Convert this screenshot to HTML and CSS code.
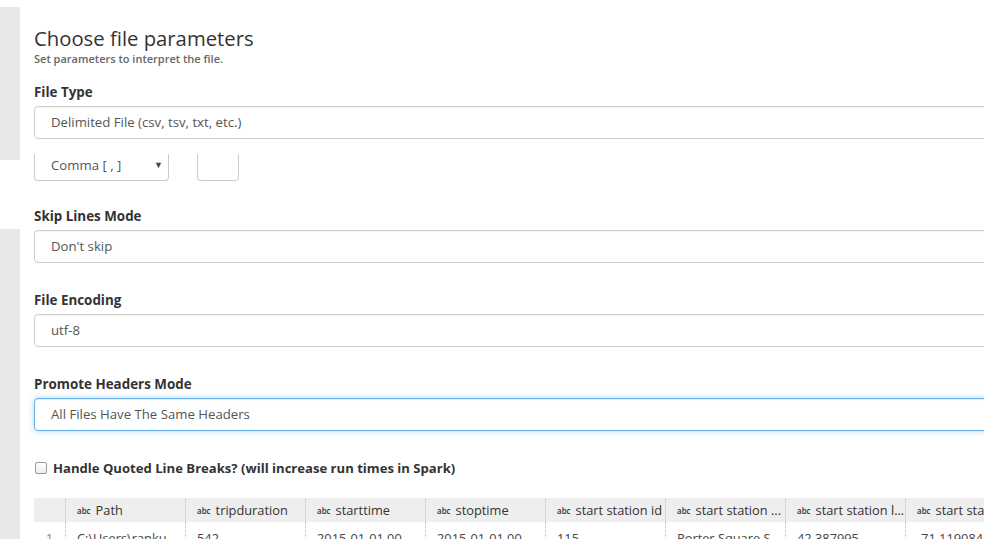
FILE: index.html
```html
<!DOCTYPE html>
<html>
<head>
<meta charset="utf-8">
<link rel="stylesheet" href="styles.css">
</head>
<body>
<div class="page">
  <aside class="rail">
    <div class="rail-top"></div>
    <div class="rail-bottom"></div>
  </aside>
  <main class="main">
    <h1 class="title">Choose file parameters</h1>
    <p class="subtitle">Set parameters to interpret the file.</p>

    <div class="field field-first">
      <label class="label">File Type</label>
      <div class="input">Delimited File (csv, tsv, txt, etc.)</div>
    </div>
    <div class="delim-row">
      <div class="select">Comma [ , ]<span class="caret">▼</span></div>
      <div class="small-box"></div>
    </div>

    <div class="field field-skip">
      <label class="label">Skip Lines Mode</label>
      <div class="input">Don't skip</div>
    </div>
    <div class="field">
      <label class="label">File Encoding</label>
      <div class="input">utf-8</div>
    </div>
    <div class="field">
      <label class="label">Promote Headers Mode</label>
      <div class="input focused">All Files Have The Same Headers</div>
    </div>

    <div class="check-row">
      <span class="checkbox"></span>
      <span class="check-label">Handle Quoted Line Breaks? (will increase run times in Spark)</span>
    </div>

    <div class="grid">
      <div class="grid-row head">
        <div class="cell idx"></div>
        <div class="cell"><span class="abc">abc</span>Path</div>
        <div class="cell"><span class="abc">abc</span>tripduration</div>
        <div class="cell"><span class="abc">abc</span>starttime</div>
        <div class="cell"><span class="abc">abc</span>stoptime</div>
        <div class="cell"><span class="abc">abc</span>start station id</div>
        <div class="cell"><span class="abc">abc</span>start station ...</div>
        <div class="cell"><span class="abc">abc</span>start station l...</div>
        <div class="cell"><span class="abc">abc</span>start stat</div>
      </div>
      <div class="grid-row body">
        <div class="cell idx">1</div>
        <div class="cell">C:\Users\ranku</div>
        <div class="cell">542</div>
        <div class="cell">2015-01-01 00</div>
        <div class="cell">2015-01-01 00</div>
        <div class="cell">115</div>
        <div class="cell">Porter Square S</div>
        <div class="cell">42.387995</div>
        <div class="cell">-71.119084</div>
      </div>
    </div>
  </main>
</div>
</body>
</html>
```

FILE: styles.css
```css
html, body {
  margin: 0;
  padding: 0;
  height: 100%;
  overflow: hidden;
  background: #fff;
}
body {
  font-family: "Open Sans", "Noto Sans", sans-serif;
  color: #333;
}
.page {
  display: flex;
  height: 539px;
  overflow: hidden;
}
.rail {
  width: 20px;
  flex: 0 0 20px;
  display: flex;
  flex-direction: column;
}
.rail-top {
  margin-top: 7px;
  height: 153px;
  background: #e8e8e8;
}
.rail-bottom {
  margin-top: 69px;
  flex: 1;
  background: #e8e8e8;
}
.main {
  flex: 1;
  min-width: 0;
  padding: 24px 0 0 14px;
  overflow: hidden;
}
.title {
  margin: 0;
  font-size: 20.3px;
  font-weight: 400;
  line-height: 28px;
  color: #333;
}
.subtitle {
  margin: 0;
  font-size: 11px;
  font-weight: 600;
  line-height: 14px;
  color: #666;
}
.field {
  margin-top: 28px;
}
.field-first {
  margin-top: 17px;
}
.field-skip {
  margin-top: 26px;
}
.label {
  display: block;
  font-size: 13.4px;
  font-weight: 700;
  line-height: 18px;
  color: #333;
  margin-bottom: 5px;
}
.input {
  height: 31px;
  width: 1000px;
  border: 1px solid #ccc;
  border-radius: 4px;
  box-sizing: content-box;
  padding: 0 16px;
  font-size: 13.2px;
  line-height: 31px;
  color: #555;
  background: #fff;
  box-shadow: inset 0 1px 1px rgba(0,0,0,0.04);
}
.input.focused {
  border-color: #66afe9;
  box-shadow: inset 0 1px 1px rgba(0,0,0,.075), 0 0 6px rgba(102,175,233,.5);
}
.delim-row {
  display: flex;
  gap: 28px;
  margin-top: 15px;
}
.select {
  width: 117px;
  height: 26px;
  border: 1px solid #ccc;
  border-top: 0;
  border-radius: 0 0 4px 4px;
  padding: 0 0 0 16px;
  font-size: 13.2px;
  line-height: 22px;
  color: #555;
  position: relative;
}
.caret {
  position: absolute;
  right: 5px;
  top: 0;
  font-size: 9px;
  color: #444;
}
.small-box {
  width: 40px;
  height: 26px;
  border: 1px solid #ccc;
  border-top: 0;
  border-radius: 0 0 4px 4px;
}
.check-row {
  display: flex;
  align-items: center;
  gap: 6px;
  margin-top: 28px;
  margin-left: 1px;
}
.checkbox {
  width: 10px;
  height: 10px;
  border: 1px solid #999;
  border-radius: 2px;
  background: linear-gradient(#fff, #ececec);
}
.check-label {
  font-size: 13.1px;
  font-weight: 700;
  line-height: 18px;
  color: #333;
}
.grid {
  margin-top: 21px;
  width: 1100px;
  font-size: 12.8px;
}
.grid-row {
  display: flex;
}
.grid-row.head {
  height: 24px;
  background: #eeeeee;
  color: #333;
}
.grid-row.body {
  height: 24px;
  color: #444;
}
.cell {
  width: 120px;
  flex: 0 0 120px;
  box-sizing: border-box;
  padding-left: 11px;
  line-height: 24px;
  white-space: nowrap;
  overflow: hidden;
}
.cell.idx {
  width: 31px;
  flex: 0 0 31px;
  padding-left: 0;
  text-align: center;
  color: #888;
}
.head .cell + .cell {
  border-left: 1px solid #d6d6d6;
}
.body .cell + .cell {
  border-left: 1px dotted #bbb;
}
.body .cell {
  line-height: 28px;
  padding-top: 2px;
}
.abc {
  font-size: 8px;
  font-weight: 600;
  margin-right: 5px;
  color: #333;
  vertical-align: 1px;
}
```
